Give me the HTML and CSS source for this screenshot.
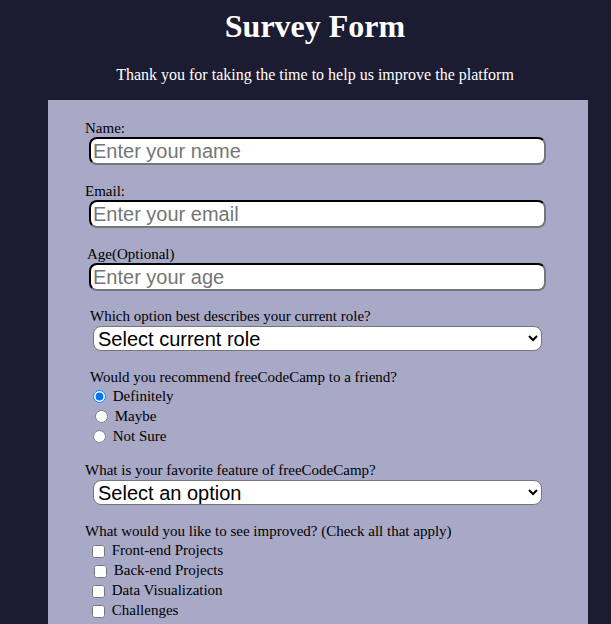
FILE: index.html
```html
<!DOCTYPE html>
<html lang="en">
<head>
<meta charset="utf-8">
<title>Survey Form</title>
<link rel="stylesheet" href="styles.css">
</head>
<body>
<header class="header">
  <h1 class="title">Survey Form</h1>
  <p class="description">Thank you for taking the time to help us improve the platform</p>
</header>
<form class="survey">
  <div class="group">
    <label class="label" for="name">Name:</label>
    <input class="text-input" id="name" type="text" placeholder="Enter your name">
  </div>
  <div class="group">
    <label class="label" for="email">Email:</label>
    <input class="text-input" id="email" type="email" placeholder="Enter your email">
  </div>
  <div class="group">
    <label class="label label-age" for="age">Age(Optional)</label>
    <input class="text-input" id="age" type="number" placeholder="Enter your age">
  </div>
  <div class="group group-select">
    <label class="label label-role" for="role">Which option best describes your current role?</label>
    <select class="dropdown" id="role">
      <option>Select current role</option>
      <option>Student</option>
      <option>Full Time Job</option>
    </select>
  </div>
  <div class="group group-radio">
    <p class="label label-role">Would you recommend freeCodeCamp to a friend?</p>
    <label class="option"><input type="radio" name="rec" checked> Definitely</label>
    <label class="option option-shift"><input type="radio" name="rec"> Maybe</label>
    <label class="option"><input type="radio" name="rec"> Not Sure</label>
  </div>
  <div class="group group-select">
    <label class="label" for="feature">What is your favorite feature of freeCodeCamp?</label>
    <select class="dropdown" id="feature">
      <option>Select an option</option>
      <option>Challenges</option>
      <option>Projects</option>
    </select>
  </div>
  <div class="group group-check">
    <p class="label">What would you like to see improved? (Check all that apply)</p>
    <label class="option"><input type="checkbox"> Front-end Projects</label>
    <label class="option option-shift"><input type="checkbox"> Back-end Projects</label>
    <label class="option"><input type="checkbox"> Data Visualization</label>
    <label class="option"><input type="checkbox"> Challenges</label>
    <label class="option"><input type="checkbox"> Open Source Community</label>
    <label class="option"><input type="checkbox"> Gitter help rooms</label>
  </div>
</form>
</body>
</html>
```

FILE: styles.css
```css
html, body {
  margin: 0;
  padding: 0;
}

body {
  background: #1b1b32;
  font-family: "Liberation Serif", "Times New Roman", serif;
  font-size: 16px;
  color: #000;
}

.header {
  width: 534px;
  margin-left: 48px;
  text-align: center;
  color: #fff;
  padding-top: 8px;
}

.title {
  margin: 0;
  font-size: 32px;
  line-height: 37px;
  font-weight: bold;
}

.description {
  margin: 21px 0 16px;
  font-size: 16px;
  line-height: 18px;
}

.survey {
  width: 540px;
  margin-left: 48px;
  background: #a8a8c7;
  padding: 19px 0 40px 37px;
  box-sizing: border-box;
  font-size: 15px;
}

.group {
  margin-bottom: 17px;
}

.label {
  display: block;
  margin: 0;
  line-height: 18px;
}

.label-age {
  padding-left: 2px;
}

.label-role {
  padding-left: 5px;
}

.text-input {
  display: block;
  box-sizing: border-box;
  width: 457px;
  height: 28px;
  margin: 0 0 0 4px;
  padding: 1px 2px;
  border: 2px inset #767676;
  border-top-color: #1b1b32;
  border-left-color: #1b1b32;
  border-radius: 8px;
  background: #fff;
  font-family: "Liberation Sans", Arial, sans-serif;
  font-size: 20px;
}

.text-input::placeholder {
  color: #757575;
}

.group-select {
  margin-top: -1px;
  margin-bottom: 17px;
}

.dropdown {
  display: block;
  box-sizing: border-box;
  width: 449px;
  height: 25px;
  margin: 1px 0 0 8px;
  border: 1px solid #767676;
  border-radius: 8px;
  background: #fff;
  font-family: "Liberation Sans", Arial, sans-serif;
  font-size: 20px;
  color: #000;
}

.group-radio {
  margin-bottom: 16px;
}

.option {
  display: block;
  height: 20px;
  line-height: 20px;
  padding-left: 3px;
}

.option-shift {
  padding-left: 5px;
}

.option input[type="radio"] {
  margin: 3px 3px 0 5px;
  vertical-align: -2px;
}

.option input[type="checkbox"] {
  margin: 3px 3px 3px 4px;
  vertical-align: -3px;
}
```
